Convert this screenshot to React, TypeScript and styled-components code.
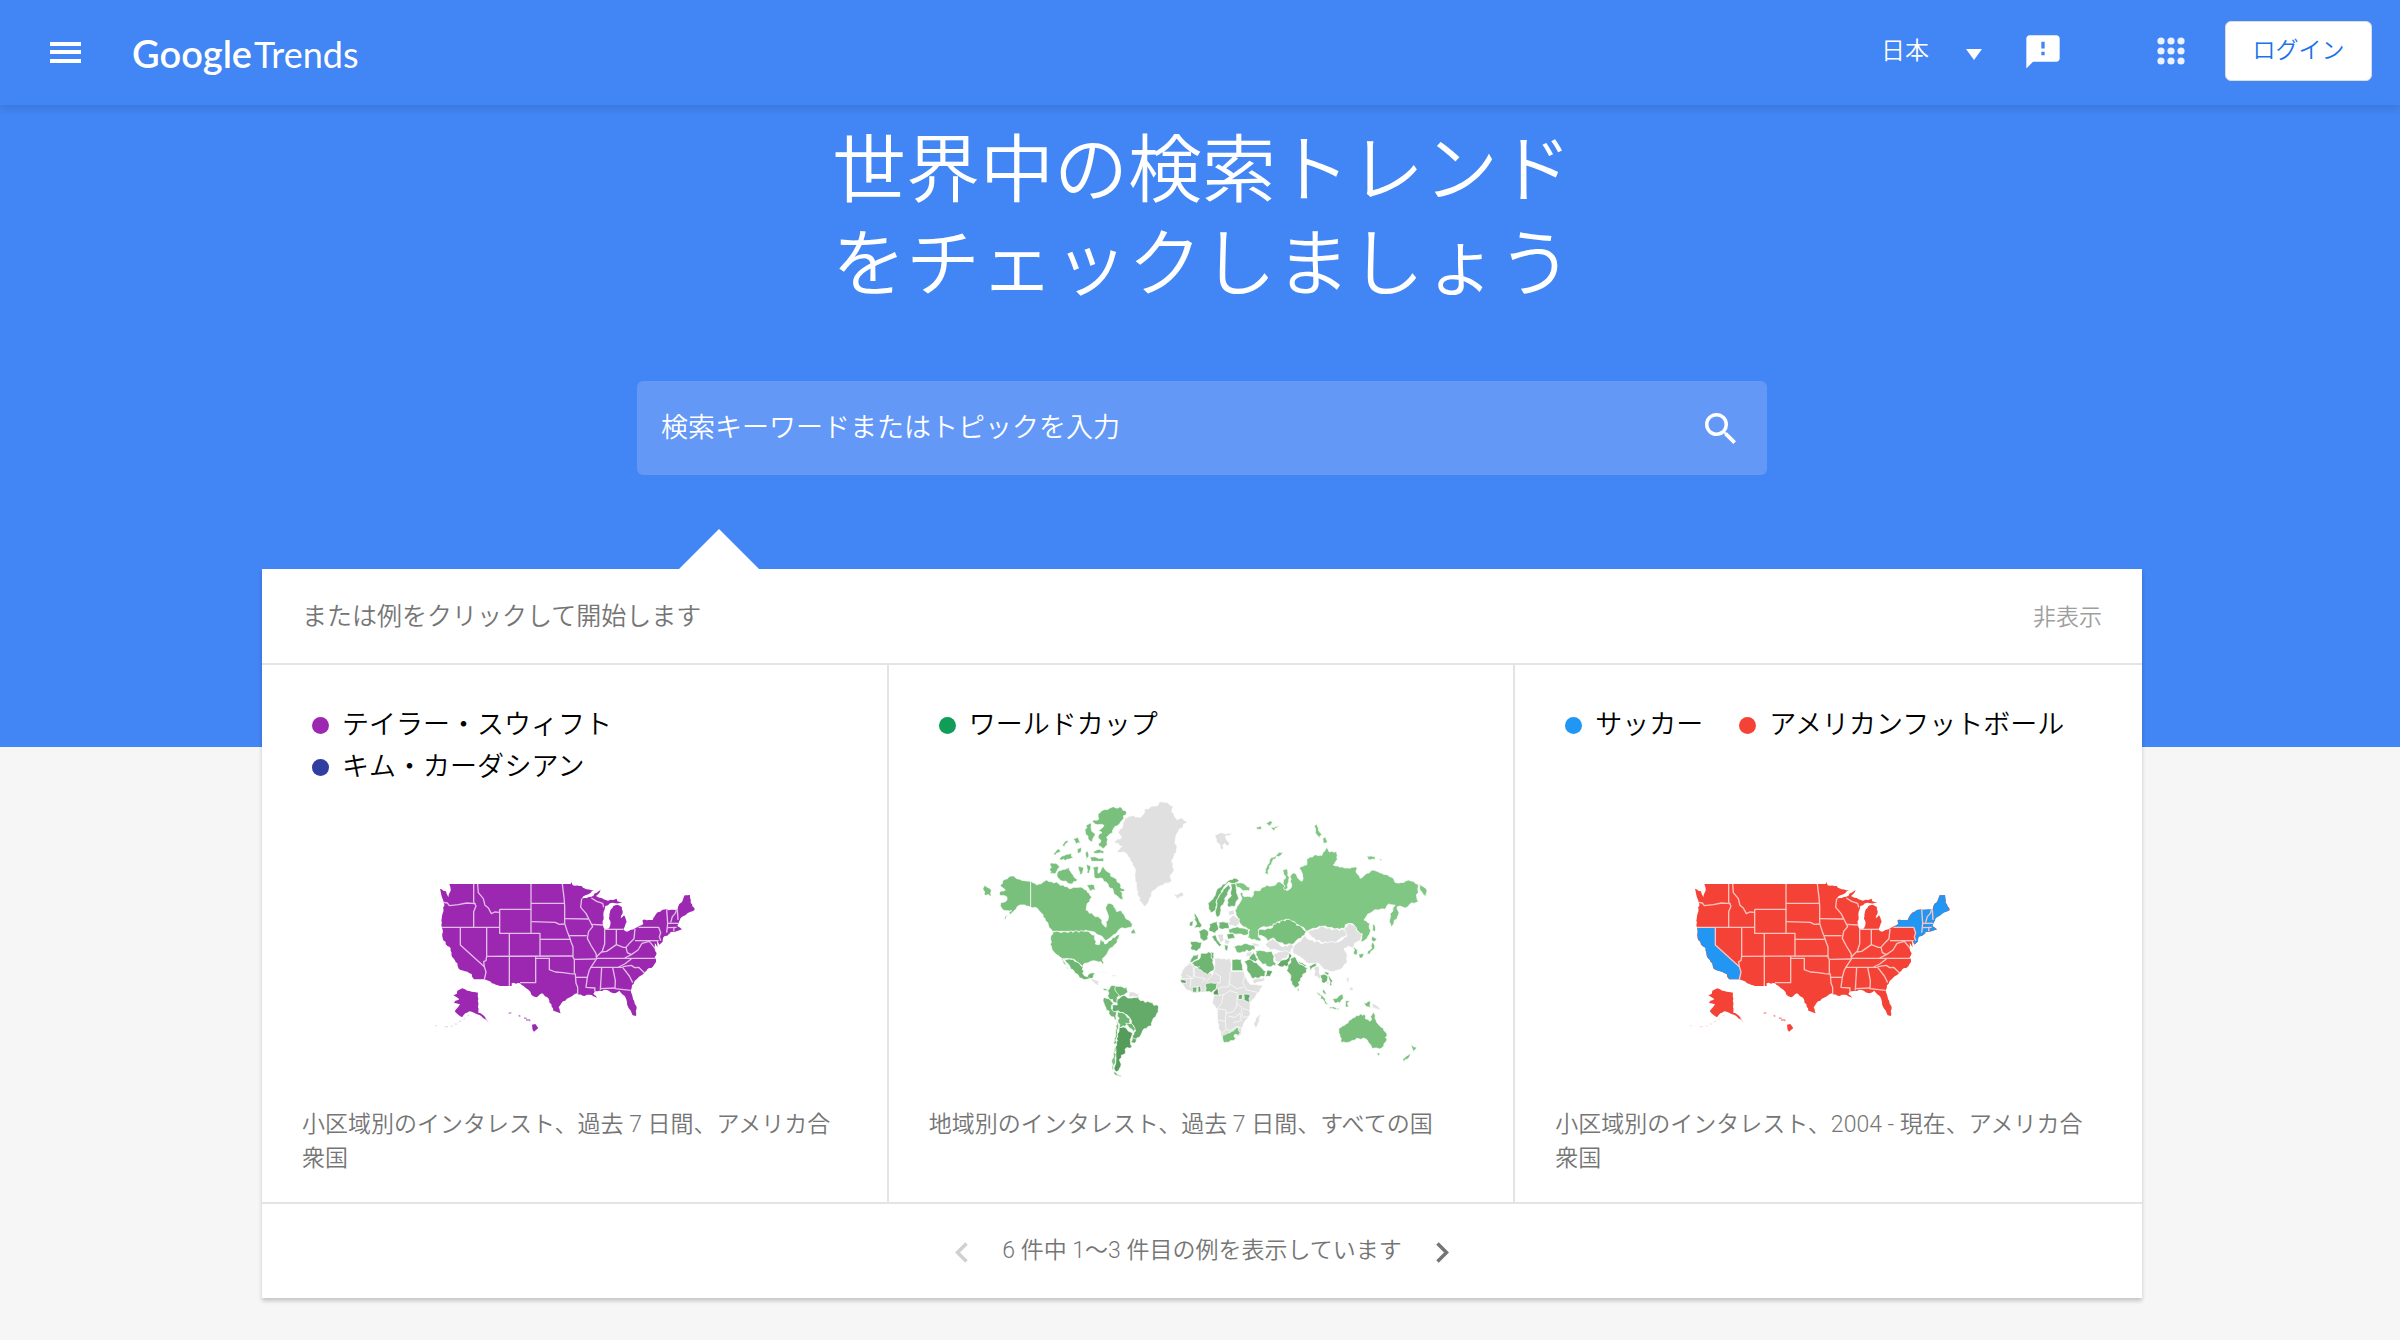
import React from "react";
import styled, { createGlobalStyle } from "styled-components";

const GlobalStyle = createGlobalStyle`
  *, *::before, *::after { box-sizing: border-box; }
  body {
    margin: 0;
    background: #f6f6f6;
    font-family: Roboto, "Noto Sans CJK JP", sans-serif;
    font-weight: 350;
    color: #000;
  }
  button, input, select { font-family: inherit; font-weight: inherit; }
`;

const Page = styled.div`
  min-height: 100vh;
  padding-bottom: 40px;
`;

/* ---------- header ---------- */

const Header = styled.header`
  position: relative;
  display: flex;
  align-items: center;
  height: 105px;
  padding: 0 28px 3px 50px;
  background: #4285f4;
  color: #fff;
  box-shadow: 0 4px 8px rgba(0, 0, 0, 0.1);
`;

const IconButton = styled.button`
  display: flex;
  align-items: center;
  justify-content: center;
  padding: 0;
  border: 0;
  background: none;
  color: inherit;
  cursor: pointer;
`;

const Logo = styled.a`
  display: flex;
  align-items: baseline;
  gap: 2px;
  margin-left: 50px;
  padding-top: 4px;
  color: #fff;
  text-decoration: none;
  font-family: Lato, sans-serif;
  line-height: 48px;
`;

const LogoGoogle = styled.span`
  font-size: 38px;
  font-weight: 600;
`;

const LogoTrends = styled.span`
  font-size: 36px;
  font-weight: 400;
`;

const Tools = styled.div`
  display: flex;
  align-items: center;
  margin-left: auto;
`;

const Region = styled.label`
  display: flex;
  align-items: center;
  margin-right: 40px;
`;

const RegionSelect = styled.select`
  appearance: none;
  width: 84px;
  padding: 0;
  border: 0;
  background: none;
  color: #fff;
  font-size: 24px;
  line-height: 36px;
`;

const AppsButton = styled(IconButton)`
  margin: 0 40px 0 94px;
`;

const LoginButton = styled.button`
  width: 147px;
  height: 60px;
  padding: 0 0 6px;
  border: 1px solid #dadce0;
  border-radius: 6px;
  background: #fff;
  color: #1a73e8;
  font-size: 23px;
  cursor: pointer;
`;

/* ---------- hero ---------- */

const Hero = styled.section`
  display: flex;
  flex-direction: column;
  align-items: center;
  padding: 19px 258px 272px 262px;
  background: #4285f4;
`;

const Title = styled.h1`
  margin: 0 0 69px;
  color: #fff;
  font-size: 74px;
  font-weight: 350;
  line-height: 94px;
`;

const SearchBox = styled.form`
  display: flex;
  align-items: center;
  width: 100%;
  max-width: 1130px;
  height: 94px;
  padding: 0 31px 0 24px;
  border-radius: 6px;
  background: #6398f7;
  color: #fff;
`;

const SearchInput = styled.input`
  flex: 1;
  min-width: 0;
  padding: 0;
  border: 0;
  outline: 0;
  background: none;
  color: #fff;
  font-size: 27px;
  line-height: 40px;
  &::placeholder { color: #fff; opacity: 1; }
`;

/* ---------- examples panel ---------- */

const Examples = styled.section`
  position: relative;
  margin: -178px 258px 0 262px;
  background: #fff;
  box-shadow: 0 3px 4px rgba(0, 0, 0, 0.2);
  &::before {
    content: "";
    position: absolute;
    left: 417px;
    top: -40px;
    border: 40px solid transparent;
    border-top: 0;
    border-bottom-color: #fff;
  }
`;

const PanelHead = styled.div`
  display: flex;
  align-items: center;
  justify-content: space-between;
  height: 96px;
  padding: 0 40px 4px;
  border-bottom: 2px solid #e4e4e4;
`;

const PanelTitle = styled.h2`
  margin: 0;
  color: #757575;
  font-size: 25px;
  font-weight: 350;
`;

const HideButton = styled.button`
  padding: 2px 0 0;
  border: 0;
  background: none;
  color: #9e9e9e;
  font-size: 23px;
  cursor: pointer;
`;

const Cards = styled.div`
  display: grid;
  grid-template-columns: repeat(3, 1fr);
`;

const Card = styled.a`
  display: flex;
  flex-direction: column;
  padding: 39px 38px 26px 40px;
  color: inherit;
  text-decoration: none;
  &:not(:last-child) { border-right: 2px solid #e4e4e4; }
`;

const Legend = styled.ul`
  display: flex;
  flex-wrap: wrap;
  align-content: flex-start;
  column-gap: 36px;
  min-height: 84px;
  margin: 0;
  padding: 0 0 0 10px;
  list-style: none;
`;

const Term = styled.li<{ $color: string }>`
  display: flex;
  align-items: center;
  gap: 13px;
  font-size: 27px;
  line-height: 42px;
  &::before {
    content: "";
    width: 17px;
    height: 17px;
    border-radius: 50%;
    background: ${(p) => p.$color};
  }
`;

const Chart = styled.div`
  display: flex;
  justify-content: center;
  height: 300px;
  margin-bottom: 20px;
`;

const Caption = styled.p`
  margin: 0;
  color: #757575;
  font-size: 23px;
  line-height: 34px;
`;

const Pager = styled.nav`
  display: flex;
  align-items: center;
  justify-content: center;
  gap: 34px;
  height: 96px;
  border-top: 2px solid #e4e4e4;
  color: #757575;
  font-size: 23px;
`;

const PagerButton = styled(IconButton)`
  padding-top: 2px;
  &:disabled { color: #d0d0d0; cursor: default; }
`;

const PagerText = styled.span`
  padding-bottom: 6px;
`;

/* ---------- map drawing ---------- */

/* Roughens a coastline: each edge is split into short steps that are pushed
   sideways by a fixed pseudo-random amount. */
function coast(points: string, amp = 3): string {
  const pts = points.trim().split(/\s+/).map((p) => p.split(",").map(Number));
  const out: string[] = [];
  let seed = 7;
  const rnd = () => {
    seed = (seed * 1103515245 + 12345) % 2147483648;
    return seed / 2147483648 - 0.5;
  };
  pts.forEach((a, i) => {
    const b = pts[(i + 1) % pts.length];
    const dx = b[0] - a[0];
    const dy = b[1] - a[1];
    const len = Math.hypot(dx, dy) || 1;
    out.push(`${a[0]},${a[1]}`);
    const straight = (dx === 0 || dy === 0) && len > 30;
    const n = straight ? 0 : Math.floor(len / 6);
    for (let k = 1; k < n; k++) {
      const t = k / n;
      const o = rnd() * 2 * amp;
      out.push(`${(a[0] + dx * t - (dy / len) * o).toFixed(1)},${(a[1] + dy * t + (dx / len) * o).toFixed(1)}`);
    }
  });
  return out.join(" ");
}

const US_OUTLINE =
  "58,42 422,42 424,36 428,46 455,48 470,58 492,60 482,68 468,75 455,86 470,84 484,80 500,68 512,60 498,78 515,84 534,92 550,90 560,86 562,94 578,97 556,100 540,100 526,108 524,118 520,135 518,160 524,178 534,178 541,165 538,140 540,125 550,108 562,104 576,112 578,130 572,145 582,136 590,155 580,178 590,185 615,175 640,162 638,150 668,150 678,132 696,120 743,118 748,102 756,96 764,76 780,75 782,98 794,120 780,126 766,136 752,144 746,158 742,168 756,178 744,182 712,190 722,190 700,202 698,215 688,224 682,214 684,232 674,218 674,236 680,250 674,262 678,276 664,294 652,298 640,312 620,328 606,346 602,362 608,382 620,410 618,438 608,436 594,410 584,378 568,362 555,370 530,360 495,364 490,372 502,384 478,374 464,378 440,370 415,384 395,398 386,412 392,430 370,422 355,385 336,370 320,382 304,374 296,360 275,345 270,340 245,340 245,348 210,348 163,328 132,328 125,312 105,304 86,296 82,280 66,260 62,235 52,228 38,205 38,180 34,165 40,125 42,100 40,92 30,56 48,64 55,82 62,62";

const US_CALIFORNIA =
  "36,173 91,173 91,225 163,290 168,318 163,328 132,328 125,312 105,304 86,296 82,280 66,260 62,235 52,228 38,205 38,180";

const US_NORTHEAST =
  "625,173 640,162 638,150 668,150 678,132 696,120 743,118 748,102 756,96 764,76 780,75 782,98 794,120 780,126 766,136 752,144 746,158 742,168 756,178 744,182 712,190 722,190 704,200 692,188 686,173";

const US_NEW_JERSEY = "692,188 702,196 698,215 690,223 684,212 692,204";

const US_ALASKA =
  "82,362 97,355 112,362 144,368 145,428 158,434 176,456 150,436 132,428 118,424 106,430 96,442 82,432 74,424 84,412 90,403 72,399 76,392 88,388 70,376 80,372";

const US_BORDERS = [
  "40,97 52,99 58,107 85,104 110,99 137,101",
  "131,42 131,96 138,108 131,125 131,172",
  "36,172 209,172",
  "143,42 145,68 160,86 165,106 175,114 184,131 194,126 209,127",
  "209,118 304,118",
  "209,118 209,190 330,190 330,258",
  "303,42 303,190",
  "303,100 404,100",
  "304,155 376,157 388,163 404,162",
  "397,42 402,82 404,108 404,160 412,185 418,200 424,218 429,230 429,262 433,268 433,310",
  "404,146 475,147",
  "330,208 422,208",
  "170,259 429,258",
  "170,172 170,259 168,272 161,275 163,290 168,306 163,328",
  "238,190 238,348",
  "91,172 91,225 163,290",
  "317,259 317,338 270,338",
  "317,265 358,265 358,299 376,306 400,308 420,311 436,312 438,340 443,352 443,373",
  "433,268 496,267",
  "438,322 474,322",
  "416,197 470,197",
  "455,86 452,112 468,130 478,150 488,170 476,184 472,205 484,228 498,250 500,266 488,284 478,300 472,322 468,352 495,354 494,364",
  "485,163 520,165",
  "484,84 500,94 518,100 521,112",
  "524,178 580,178",
  "524,178 524,222 516,246",
  "559,178 559,222",
  "498,262 514,246 530,244 559,224 580,232 588,232 600,218 612,206 615,176",
  "615,212 686,212",
  "625,172 686,172 692,188 688,200 692,212",
  "496,265 676,265",
  "480,292 578,292",
  "588,232 592,248 604,254 584,264",
  "604,254 624,240 636,220 658,214 668,226 676,236",
  "604,267 584,282 566,291",
  "515,292 511,360",
  "548,292 556,332 555,356 602,361",
  "511,356 555,354",
  "578,292 598,318 608,338",
  "578,290 604,286 614,293 626,292 644,310",
  "710,118 713,160 710,188",
  "740,118 736,130 727,140 722,158",
  "742,118 744,150",
  "712,160 745,160",
  "712,173 740,172",
  "732,173 731,184",
];

const US_ALEUTIANS = "M15,467 h5 M44,470 h10 M62,468 h6 M74,462 h8 M86,456 l8,-4 M100,448 l6,-3 M112,438 l6,-3 M164,440 l6,6 M170,452 l5,4";

const US_HAWAII = "M236,430 l8,-2 M266,436 l5,3 M282,444 l8,1 M288,450 l8,0 M296,448 l5,5";

function UsMap({ fill, border, accent }: { fill: string; border: string; accent?: string }) {
  return (
    <svg width="290" height="300" viewBox="0 -246 870 900" role="img" aria-label="アメリカ合衆国の地図">
      <polygon points={coast(US_OUTLINE, 2)} fill={fill} />
      {accent && (
        <g fill={accent}>
          <polygon points={coast(US_CALIFORNIA, 1)} />
          <polygon points={coast(US_NORTHEAST, 1)} />
          <polygon points={US_NEW_JERSEY} />
        </g>
      )}
      <g fill="none" stroke={border} strokeWidth="4" strokeLinejoin="round">
        {US_BORDERS.map((b) => (
          <polyline key={b} points={b} />
        ))}
      </g>
      <polygon points={coast(US_ALASKA, 1)} fill={fill} />
      <polygon points="306,464 316,462 325,474 312,485 308,480" fill={fill} />
      <path d={US_ALEUTIANS} stroke={fill} strokeWidth="2" opacity="0.35" fill="none" />
      <path d={US_HAWAII} stroke={fill} strokeWidth="4" opacity="0.6" fill="none" />
      <path d="M682,214 l4,18 M676,222 l2,14" stroke="#fff" strokeWidth="3" fill="none" />
    </svg>
  );
}

type Land = [string, string];

const GREY = "#e0e0e0";
const G1 = "#80c783";
const G2 = "#79c07c";
const G3 = "#6fb673";
const G4 = "#64aa68";
const G5 = "#559c5a";

const AMERICAS: Land[] = [
  [G2, "182,273 182,352 165,345 150,345 138,358 122,372 100,390 96,392 125,362 110,362 95,355 92,338 108,334 110,320 90,317 88,308 106,300 90,285 105,268 125,258 150,268"],
  [G2, "40,282 52,292 64,300 62,312 76,328 60,318 42,312"],
  [G2, "182,273 200,285 230,270 245,275 265,280 285,290 305,295 325,292 350,300 358,310 366,322 352,340 348,360 370,375 390,385 400,405 408,412 408,395 415,385 408,360 413,340 430,345 440,365 455,362 465,380 487,402 485,412 450,416 436,432 420,444 406,452 395,438 375,427 345,420 345,424 248,424 235,405 225,385 210,365 195,352 182,352"],
  [G2, "242,218 262,222 270,232 255,252 240,252"],
  [G2, "266,242 285,238 298,232 305,250 322,268 308,282 280,274 262,262"],
  [G2, "324,228 340,232 338,250 328,256"],
  [G2, "350,222 362,228 358,250 350,248"],
  [G2, "368,232 384,228 384,250 400,228 414,246 430,262 448,278 452,294 466,300 452,304 465,332 446,322 432,312 428,296 416,290 408,276 392,264 372,262"],
  [G2, "350,284 372,284 376,300 360,304"],
  [G2, "384,72 400,60 430,50 456,54 470,68 452,96 434,110 428,128 410,142 412,164 398,176 386,168 392,150 384,140 396,128 384,122 402,106 384,104 366,94 386,88"],
  [G2, "348,106 362,98 364,118 376,132 368,156 354,146 346,126"],
  [G2, "370,184 388,178 402,184 400,192 372,190"],
  [G2, "360,200 400,204 402,214 364,214"],
  [G2, "310,146 322,142 332,160 318,162"],
  [G2, "276,166 288,152 296,152 284,170"],
  [G2, "250,192 266,176 272,184 256,196"],
  [G2, "276,198 304,190 310,204 286,212 268,206"],
  [G2, "322,176 334,172 332,188 322,190"],
  [G2, "346,188 354,182 356,200 346,210"],
  [G2, "482,426 490,416 500,434 486,432"],
  [G2, "248,425 345,424 375,435 376,462 388,464 394,446 404,462 424,450 440,436 456,426 446,444 436,462 420,475 412,490 398,505 402,530 393,515 370,512 345,520 338,530 325,518 310,508 272,503 255,490 245,475 242,450"],
  [G3, "284,508 310,508 325,518 340,531 338,550 352,560 360,550 376,550 370,562 350,568 335,565 315,550 300,530"],
  [G3, "270,504 278,506 288,526 298,540 290,534"],
  [GREY, "356,564 376,570 388,574 386,588 376,582"],
  [G2, "382,588 396,596 408,596 418,602 402,602"],
  [GREY, "390,542 404,546 418,552 400,548"],
  [GREY, "428,554 440,556 436,560 426,558"],
  [GREY, "466,84 490,76 512,82 528,56 556,48 575,35 612,48 605,66 622,90 636,84 650,94 626,122 616,150 620,180 606,210 612,240 600,258 606,274 570,288 545,306 536,336 525,350 512,335 500,300 495,260 495,235 480,205 465,188 440,186 456,170 432,155 454,142 444,128 458,108"],
  [GREY, "610,310 622,314 636,306 642,316 622,328"],
  [G3, "413,602 426,586 440,588 438,604 452,612 442,622 445,640 436,638 416,624"],
  [G3, "438,588 470,592 474,606 460,616 448,622 442,610 436,602"],
  [GREY, "474,604 508,610 504,622 480,622"],
  [G3, "402,622 416,626 430,640 424,656 440,668 440,690 425,680 408,654 402,640"],
  [G4, "442,628 462,616 480,624 505,620 512,632 540,637 566,650 560,672 550,685 545,708 522,716 512,736 498,750 486,738 498,722 484,700 480,685 465,672 445,662 430,665 426,645 442,645"],
  [G3, "443,665 462,670 480,685 480,698 465,710 447,710"],
  [G3, "467,700 484,700 496,716 490,726 478,714"],
  [G5, "447,712 465,712 488,730 484,742 482,756 486,770 465,778 465,792 454,796 450,815 452,830 440,845 432,835 438,800 437,770 443,740"],
  [G4, "486,742 500,748 494,760 482,757"],
  [G2, "440,690 446,710 442,740 436,770 436,800 430,835 440,850 455,862 435,855 426,830 430,790 436,740"],
];

const EURASIA: Land[] = [
  [G1, "135,362 145,345 154,330 148,300 165,320 185,322 190,305 210,302 230,285 250,287 270,275 284,287 290,302 300,297 305,282 300,260 312,248 322,262 336,274 338,258 328,235 350,225 350,208 378,194 396,196 410,172 418,186 440,184 442,208 430,225 450,232 480,235 498,230 500,250 510,265 530,250 550,240 576,250 605,262 615,277 640,278 655,270 684,282 684,302 680,320 685,335 660,342 646,354 630,348 622,350 625,375 612,398 604,410 598,395 600,372 616,346 596,342 585,358 550,362 530,378 522,390 540,400 540,428 525,450 512,455 515,435 500,420 490,402 480,400 466,404 466,418 430,415 400,408 370,415 350,424 335,410 318,404 312,394 290,388 250,402 248,410 215,412 205,420 205,435 214,452 192,448 172,444 180,420 160,410 150,400 142,380"],
  [G1, "686,280 700,290 711,300 710,320 700,314 690,300"],
  [G1, "138,278 160,280 180,292 178,303 158,302 142,292"],
  [G1, "224,250 232,225 240,206 262,192 282,182 276,192 250,208 238,228 234,246 242,260"],
  [G1, "278,240 290,236 298,262 294,294 284,300 280,276 286,258"],
  [G1, "372,108 381,102 386,122 396,134 388,146 376,128"],
  [G1, "398,146 406,140 413,156 400,160"],
  [G1, "530,198 556,200 554,210 536,210"],
  [G1, "566,206 578,208 572,212"],
  [G1, "198,112 212,108 216,116 202,118"],
  [G1, "228,100 240,92 248,96 238,108"],
  [G1, "240,112 254,112 266,108 252,124"],
  [GREY, "76,134 96,128 106,132 128,124 122,136 106,138 118,158 116,168 104,160 96,180 84,160"],
  [G2, "205,436 205,420 248,412 250,402 290,388 312,396 320,406 335,412 350,424 344,436 325,446 310,462 290,464 270,458 248,444 234,456 222,440"],
  [GREY, "350,426 375,417 395,408 430,418 466,420 468,438 440,455 400,458 365,442"],
  [GREY, "306,474 325,456 345,436 360,450 400,460 440,456 470,440 464,412 480,400 492,405 500,422 518,432 512,452 492,462 490,474 475,468 462,475 472,498 470,520 455,535 430,545 404,540 385,520 355,520 330,500 308,486"],
  [GREY, "226,462 250,445 280,470 304,462 312,474 296,488 268,482 240,480"],
  [GREY, "252,492 285,480 304,490 285,505 266,516 254,510"],
  [G4, "262,524 276,510 290,508 298,488 306,498 300,512 290,530 266,528"],
  [G3, "300,506 314,500 324,516 354,534 345,550 332,565 324,590 315,594 305,575 298,550 290,542 294,526 302,518"],
  [G3, "322,592 328,600 323,606"],
  [G3, "326,514 350,526 344,530 326,520"],
  [G3, "358,528 382,518 380,530 366,534 362,544"],
  [G2, "196,482 216,482 245,484 252,500 256,528 236,530 214,518 202,500"],
  [G3, "174,510 190,484 204,508 196,516"],
  [G3, "162,514 180,508 200,518 216,535 230,545 220,560 190,566 178,550"],
  [G4, "232,540 247,542 240,560 225,562"],
  [GREY, "188,568 222,562 225,572 195,582"],
  [G2, "130,470 165,460 192,464 194,480 140,487"],
  [GREY, "168,488 188,485 180,500 168,502"],
  [GREY, "182,458 206,462 208,472 194,470"],
  [GREY, "374,530 386,528 392,558 388,572 372,552"],
  [G3, "390,556 402,552 414,560 412,574 402,580 394,576"],
  [G3, "404,544 418,548 414,556 428,572 426,586 418,588 420,574"],
  [GREY, "408,576 418,576 414,586"],
  [G2, "392,592 402,600 410,614 400,610"],
  [G2, "380,604 392,614 406,626 416,646 404,640"],
  [G2, "418,650 448,654 446,660 420,656"],
  [G2, "428,626 442,624 458,606 460,626 450,640 432,636"],
  [G2, "466,632 480,632 472,640 476,650 468,652"],
  [G2, "514,634 528,640 540,632 544,654 530,650"],
  [GREY, "544,638 562,648 580,662 562,658 546,654"],
  [GREY, "472,560 478,566 476,578 470,574"],
  [GREY, "480,590 490,594 488,602 478,600"],
  [G2, "446,715 464,706 476,692 500,676 524,672 526,686 540,694 549,667 558,690 574,712 590,730 588,755 575,774 546,776 534,756 526,746 500,745 480,756 455,758 450,740"],
  [G2, "560,788 571,790 565,799"],
  [G2, "662,760 670,770 680,772 668,788"],
  [G2, "664,784 656,804 642,816 638,808"],
  [G2, "546,438 560,446 552,456 544,450"],
  [G2, "550,454 554,474 540,492 522,496 540,480"],
  [G2, "506,492 522,490 516,504 508,504"],
  [G2, "549,394 556,410 554,432 547,420"],
  [G2, "490,468 502,480 500,496 491,492"],
];

const EUROPE_AFRICA: Land[] = [
  [G3, "84,130 98,118 112,86 140,66 162,54 178,62 164,70 146,66 128,88 110,120 108,148 92,158 86,146"],
  [G3, "112,118 130,88 146,74 152,84 138,110 132,128 122,144 120,166 112,172 106,154"],
  [G3, "152,72 166,70 170,92 176,116 162,140 144,140 142,122 154,108"],
  [G3, "44,158 52,170 58,184 66,196 60,204 42,204 50,192 44,180"],
  [G3, "30,186 40,182 38,198 28,198"],
  [G3, "88,192 112,184 116,208 104,220 88,214"],
  [G3, "116,186 146,186 148,206 128,208 116,202"],
  [G3, "56,214 72,206 86,216 84,238 72,244 60,234"],
  [G3, "32,244 66,246 62,264 50,274 34,270"],
  [G3, "94,230 106,224 112,240 126,254 118,260 102,242"],
  [GREY, "110,224 130,222 132,240 122,250"],
  [G3, "140,222 160,220 166,236 144,238"],
  [GREY, "134,236 150,242 144,254 134,250"],
  [G3, "132,254 144,256 142,274 134,268"],
  [G2, "146,208 172,200 206,208 206,222 190,226 176,222 150,220"],
  [GREY, "146,178 160,166 178,176 178,192 166,200 148,196"],
  [GREY, "144,154 162,150 164,164 148,168"],
  [GREY, "2,344 14,320 30,308 60,320 98,344 104,328 102,294 152,298 154,334 192,334 200,356 212,374 248,376 236,398 210,428 210,464 198,480 186,502 184,522 160,542 132,548 122,520 112,484 112,450 98,432 100,412 108,400 96,392 74,396 40,398 20,390 6,370"],
  [G3, "28,308 40,286 56,282 54,296 38,306"],
  [G3, "34,310 60,294 62,280 98,276 98,306 102,330 82,344"],
  [G3, "92,276 102,278 100,298 94,294"],
  [G3, "156,298 184,298 190,332 156,332"],
  [G3, "78,370 112,368 108,388 94,398 76,392"],
  [G3, "36,382 50,380 50,398 38,398"],
  [G4, "54,380 62,378 62,396 54,396"],
  [G5, "100,396 114,384 118,406 100,404"],
  [G4, "190,402 210,404 208,428 192,420"],
  [G4, "174,406 186,402 186,418 174,418"],
  [G5, "0,358 18,362 18,370 4,368"],
  [G2, "128,526 150,518 174,500 180,518 160,542 132,548"],
  [GREY, "226,476 242,462 238,484 228,508 222,496"],
];

const AFRICA_BORDERS = [
  "30,308 40,322 40,356 8,356",
  "60,320 42,324 44,350 76,356 66,368",
  "98,344 78,366",
  "104,338 122,350 120,370 112,368",
  "150,334 150,356 146,380 120,382 112,392",
  "146,370 170,386 190,382",
  "196,344 188,368 200,390 236,398",
  "118,406 132,404 150,392 174,400",
  "130,404 124,430 112,446 138,450 140,460 158,456 170,440 172,404",
  "170,430 190,446 210,452",
  "112,480 136,484 138,456",
  "136,484 138,508 124,522",
  "138,508 152,512 168,500 184,504",
  "144,468 164,472 180,460 184,482 160,488",
  "184,446 188,472 206,470",
  "20,346 34,352 30,382",
];

function Lands({ items, amp }: { items: Land[]; amp: number }) {
  return (
    <>
      {items.map(([fill, pts]) => (
        <polygon key={pts} points={coast(pts, amp)} fill={fill} />
      ))}
    </>
  );
}

function WorldMap() {
  return (
    <svg width="460" height="300" viewBox="6 -6 1380 900" role="img" aria-label="世界地図">
      <g stroke="#fff" strokeWidth="2" strokeLinejoin="round">
        <Lands items={AMERICAS} amp={3} />
        <g transform="translate(660 0)">
          <Lands items={EURASIA} amp={3} />
        </g>
        <g transform="translate(630 210)">
          <Lands items={EUROPE_AFRICA} amp={2} />
          <g fill="none">
            {AFRICA_BORDERS.map((b) => (
              <polyline key={b} points={b} />
            ))}
          </g>
          <circle cx="167" cy="528" r="5" fill="#fff" />
        </g>
      </g>
    </svg>
  );
}

/* ---------- page ---------- */

export default function App() {
  return (
    <Page>
      <GlobalStyle />
      <Header>
        <IconButton aria-label="メニュー">
          <svg width="32" height="24" viewBox="0 0 32 24" fill="#fff">
            <path d="M0 3h31v4H0zM0 11h31v4H0zM0 20h31v4H0z" />
          </svg>
        </IconButton>
        <Logo href="#home">
          <LogoGoogle>Google</LogoGoogle>
          <LogoTrends>Trends</LogoTrends>
        </Logo>
        <Tools>
          <Region>
            <RegionSelect aria-label="地域" defaultValue="jp">
              <option value="jp">日本</option>
            </RegionSelect>
            <svg width="18" height="17" viewBox="0 0 18 17" fill="#fff" aria-hidden="true">
              <path d="M1 6h16l-8 11z" />
            </svg>
          </Region>
          <IconButton aria-label="フィードバックを送信">
            <svg width="40" height="40" viewBox="0 -0.500 24 24" fill="#fff">
              <path d="M20 2H4c-1.100 0-1.990.9-1.990 2L2 22l4-4h14c1.100 0 2-.9 2-2V4c0-1.100-.9-2-2-2zm-7 12h-2v-2h2v2zm0-4h-2V6h2v4z" />
            </svg>
          </IconButton>
          <AppsButton aria-label="Google アプリ">
            <svg width="28" height="28" viewBox="0 0 28 28" fill="#fff" fillOpacity="0.9">
              {[4, 14, 24].map((y) => [4, 14, 24].map((x) => <circle key={`${x}-${y}`} cx={x} cy={y} r="3.600" />))}
            </svg>
          </AppsButton>
          <LoginButton>ログイン</LoginButton>
        </Tools>
      </Header>

      <main>
        <Hero>
          <Title>
            世界中の検索トレンド
            <br />
            をチェックしましょう
          </Title>
          <SearchBox onSubmit={(e) => e.preventDefault()}>
            <SearchInput
              type="text"
              aria-label="検索キーワードまたはトピックを入力"
              placeholder="検索キーワードまたはトピックを入力"
            />
            <IconButton type="submit" aria-label="検索">
              <svg width="31" height="31" viewBox="3 3 17.500 17.500" fill="#fff">
                <path d="M15.500 14h-.79l-.28-.27A6.471 6.471 0 0 0 16 9.500 6.500 6.500 0 1 0 9.500 16c1.610 0 3.090-.59 4.230-1.570l.27.28v.79l5 4.990L20.490 19l-4.990-5zm-6 0C7.010 14 5 11.990 5 9.500S7.010 5 9.500 5 14 7.010 14 9.500 11.990 14 9.500 14z" />
              </svg>
            </IconButton>
          </SearchBox>
        </Hero>

        <Examples>
          <PanelHead>
            <PanelTitle>または例をクリックして開始します</PanelTitle>
            <HideButton>非表示</HideButton>
          </PanelHead>
          <Cards>
            <Card href="#taylor-kim">
              <Legend>
                <Term $color="#9c27b0">テイラー・スウィフト</Term>
                <Term $color="#303f9f">キム・カーダシアン</Term>
              </Legend>
              <Chart>
                <UsMap fill="#9c27b0" border="#e1bee7" />
              </Chart>
              <Caption>小区域別のインタレスト、過去 7 日間、アメリカ合衆国</Caption>
            </Card>
            <Card href="#world-cup">
              <Legend>
                <Term $color="#0f9d58">ワールドカップ</Term>
              </Legend>
              <Chart>
                <WorldMap />
              </Chart>
              <Caption>地域別のインタレスト、過去 7 日間、すべての国</Caption>
            </Card>
            <Card href="#football">
              <Legend>
                <Term $color="#2196f3">サッカー</Term>
                <Term $color="#f44336">アメリカンフットボール</Term>
              </Legend>
              <Chart>
                <UsMap fill="#f44336" border="#fbc4c0" accent="#2196f3" />
              </Chart>
              <Caption>小区域別のインタレスト、2004 - 現在、アメリカ合衆国</Caption>
            </Card>
          </Cards>
          <Pager aria-label="例のページ">
            <PagerButton aria-label="前へ" disabled>
              <svg width="13" height="21" viewBox="0 0 13 21" fill="none" stroke="currentColor" strokeWidth="3.500">
                <path d="M11.500 1.500l-9 9 9 9" />
              </svg>
            </PagerButton>
            <PagerText>6 件中 1～3 件目の例を表示しています</PagerText>
            <PagerButton aria-label="次へ">
              <svg width="13" height="21" viewBox="0 0 13 21" fill="none" stroke="currentColor" strokeWidth="3.500">
                <path d="M1.500 1.500l9 9-9 9" />
              </svg>
            </PagerButton>
          </Pager>
        </Examples>
      </main>
    </Page>
  );
}
